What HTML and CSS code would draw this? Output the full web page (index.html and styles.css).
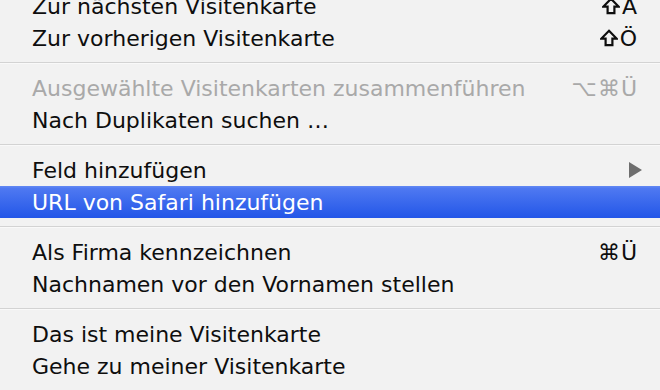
FILE: index.html
```html
<!DOCTYPE html>
<html lang="de">
<head>
    <meta charset="UTF-8">
    <title>Visitenkarte Menü</title>
    <link rel="stylesheet" href="styles.css">
</head>
<body>
    <ul class="menu">
        <li class="menu-item">
            <span>Zur nächsten Visitenkarte</span>
            <span class="key"><svg class="shift-icon" viewBox="0 0 18 18"><path d="M9 1.8 L16.6 9.6 H12.4 V16.2 H5.6 V9.6 H1.4 Z"/></svg>Ä</span>
        </li>
        <li class="menu-item">
            <span>Zur vorherigen Visitenkarte</span>
            <span class="key"><svg class="shift-icon" viewBox="0 0 18 18"><path d="M9 1.8 L16.6 9.6 H12.4 V16.2 H5.6 V9.6 H1.4 Z"/></svg>Ö</span>
        </li>
        <li class="menu-sep"></li>
        <li class="menu-item disabled"><span>Ausgewählte Visitenkarten zusammenführen</span><span class="key">⌥⌘Ü</span></li>
        <li class="menu-item"><span>Nach Duplikaten suchen …</span></li>
        <li class="menu-sep"></li>
        <li class="menu-item"><span>Feld hinzufügen</span><span class="submenu-arrow"></span></li>
        <li class="menu-item selected"><span>URL von Safari hinzufügen</span></li>
        <li class="menu-sep"></li>
        <li class="menu-item"><span>Als Firma kennzeichnen</span><span class="key">⌘Ü</span></li>
        <li class="menu-item"><span>Nachnamen vor den Vornamen stellen</span></li>
        <li class="menu-sep"></li>
        <li class="menu-item"><span>Das ist meine Visitenkarte</span></li>
        <li class="menu-item"><span>Gehe zu meiner Visitenkarte</span></li>
    </ul>
</body>
</html>
```

FILE: styles.css
```css
body {
    margin: 0;
    background: #f2f2f2;
    font-family: "DejaVu Sans", "Noto Sans", sans-serif;
    overflow: hidden;
}
.menu {
    list-style: none;
    margin: -10px 0 0 0;
    padding: 0;
}
.menu-item {
    display: flex;
    align-items: center;
    justify-content: space-between;
    height: 32px;
    padding: 0 22px 0 32px;
    font-size: 22px;
    color: #0e0e0e;
    white-space: nowrap;
}
.menu-item.disabled { color: #a9a9a9; }
.menu-item.selected {
    color: #fff;
    background: linear-gradient(#5f86f3 0, #5f86f3 1px, #4f79f1 2px, #2356e8 100%);
}
.key {
    display: flex;
    align-items: center;
    font-size: 22px;
    letter-spacing: 1px;
}
.shift-icon {
    width: 18px;
    height: 18px;
    margin-right: 2px;
    fill: none;
    stroke: #0e0e0e;
    stroke-width: 2.2;
    stroke-linejoin: miter;
}
.menu-sep {
    height: 18px;
    display: flex;
    flex-direction: column;
    justify-content: center;
}
.menu-sep::before {
    content: "";
    display: block;
    height: 1px;
    background: #d3d3d3;
    border-bottom: 1px solid #f9f9f9;
}
.submenu-arrow {
    width: 0;
    height: 0;
    margin-right: -4px;
    border-top: 8px solid transparent;
    border-bottom: 8px solid transparent;
    border-left: 13px solid #6e6e6e;
}
```
